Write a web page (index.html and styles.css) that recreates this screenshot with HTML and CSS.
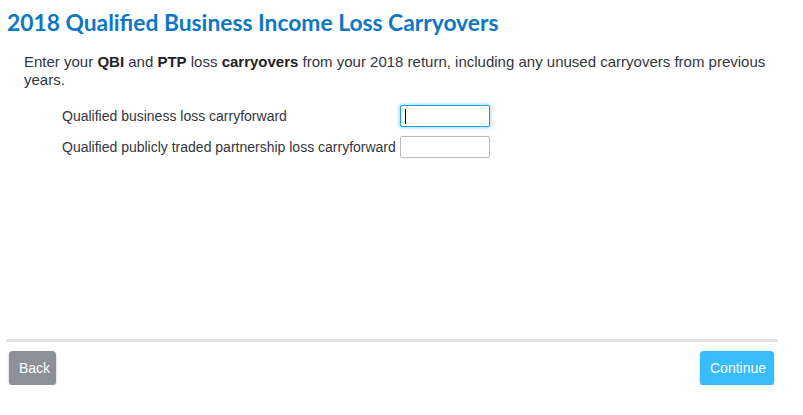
FILE: index.html
```html
<!DOCTYPE html>
<html lang="en">
<head>
<meta charset="utf-8">
<title>2018 Qualified Business Income Loss Carryovers</title>
<link rel="stylesheet" href="styles.css">
</head>
<body>
<div class="page">
  <main class="content">
    <h1 class="title">2018 Qualified Business Income Loss Carryovers</h1>
    <p class="intro">Enter your <b>QBI</b> and <b>PTP</b> loss <b>carryovers</b> from your 2018 return, including any unused carryovers from previous years.</p>
    <div class="fields">
      <label class="field">
        <span class="field-label">Qualified business loss carryforward</span>
        <span class="input-wrap">
          <input class="field-input is-focused" type="text">
          <span class="caret"></span>
        </span>
      </label>
      <label class="field">
        <span class="field-label">Qualified publicly traded partnership loss carryforward</span>
        <span class="input-wrap">
          <input class="field-input" type="text">
        </span>
      </label>
    </div>
  </main>
  <footer class="footer">
    <button class="btn btn-back" type="button">Back</button>
    <button class="btn btn-continue" type="button">Continue</button>
  </footer>
</div>
</body>
</html>
```
FILE: styles.css
```css
html, body {
  margin: 0;
  padding: 0;
  background: #ffffff;
}
body {
  font-family: "Liberation Sans", Arial, sans-serif;
  font-size: 14px;
  color: #333640;
}
.page {
  width: 772px;
  padding: 0 25px 0 6px;
}
.content {
  height: 339px;
  box-sizing: border-box;
  padding-top: 8px;
}
.title {
  margin: 0 0 0 1px;
  font-family: Lato, "Noto Sans", sans-serif;
  font-weight: 700;
  font-size: 22.8px;
  line-height: 28px;
  color: #0d77c6;
}
.intro {
  margin: 17px 0 0 18px;
  font-size: 15px;
  line-height: 18px;
  padding-right: 2px;
}
.intro b {
  font-weight: 700;
  color: #222;
}
.fields {
  margin: 16px 0 0 56px;
  display: flex;
  flex-direction: column;
  gap: 9px;
}
.field {
  display: flex;
  align-items: center;
  gap: 4px;
}
.field-label {
  width: 334px;
  white-space: nowrap;
}
.input-wrap {
  position: relative;
  display: flex;
}
.field-input {
  width: 90px;
  height: 22px;
  box-sizing: border-box;
  margin: 0;
  padding: 2px 4px;
  border: 1px solid #b9b9b9;
  border-radius: 2px;
  font: inherit;
  outline: none;
  background: #fff;
}
.field-input.is-focused {
  border-color: #139ee0;
  box-shadow: 0 0 3px 1px rgba(60, 170, 235, 0.45);
}
.caret {
  position: absolute;
  left: 5px;
  top: 4px;
  width: 1px;
  height: 15px;
  background: #000;
}
.footer {
  border-top: 3px solid #e2e2e2;
  padding: 9px 4px 0 3px;
  display: flex;
  justify-content: space-between;
  align-items: flex-start;
}
.btn {
  height: 34px;
  border: none;
  border-radius: 4px;
  color: #fff;
  font-family: "Liberation Sans", Arial, sans-serif;
  font-size: 14px;
  padding: 0 10px;
  box-shadow: 0 1px 2px rgba(0, 0, 0, 0.35);
  cursor: pointer;
}
.btn-back {
  width: 47px;
  background: #8d9099;
}
.btn-continue {
  width: 74px;
  background: #36bdfa;
}
```
